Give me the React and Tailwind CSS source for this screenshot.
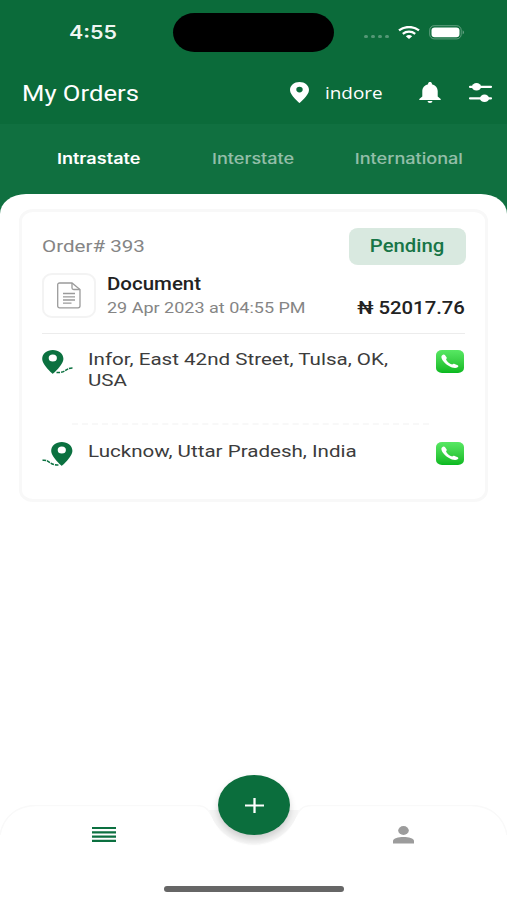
import { clsx } from 'clsx';

const TABS = ['Intrastate', 'Interstate', 'International'];

function Wide({ className, scale = 'scale-x-[1.17]', children }) {
  return <span className={clsx('inline-block whitespace-nowrap', scale, className)}>{children}</span>;
}

function StatusBar() {
  return (
    <div className="flex h-[64px] items-center pl-[69px] pr-[42px]">
      <Wide scale="scale-x-[1.19]" className="w-[104px] origin-left translate-y-[0.5px] font-['Inter'] text-[18px] leading-none font-semibold text-white/95">
        4:55
      </Wide>
      <div className="h-[39px] w-[161px] rounded-[22px/20px] bg-black" />
      <div className="ml-auto flex items-center">
        <div className="mt-[9px] mr-[9px] flex gap-[3px]">
          {[0, 1, 2, 3].map((dot) => (
            <span key={dot} className="h-[3px] w-[4px] rounded-full bg-white/30" />
          ))}
        </div>
        <svg className="mr-[9px] h-[13px] w-[22px]" viewBox="0 0 22 13" fill="none" stroke="#fff" strokeWidth="2.3">
          <path d="M1 4.4C6.6-.1 15.4-.1 21 4.4" />
          <path d="M4.8 7.8C8.4 5 13.6 5 17.2 7.8" />
          <path d="M7.8 10.2Q11 7.9 14.2 10.2L11 12.9Z" fill="#fff" stroke="none" />
        </svg>
        <svg className="h-[15px] w-[36px]" viewBox="0 0 36 15">
          <rect x=".7" y=".7" width="31.5" height="13.2" rx="4.5" fill="none" stroke="#fff" strokeOpacity=".35" />
          <rect x="2.5" y="2.4" width="28" height="9.8" rx="3.2" fill="#fff" />
          <path d="M33.7 5.3c1.7.8 1.7 3.4 0 4.2z" fill="#fff" fillOpacity=".4" />
        </svg>
      </div>
    </div>
  );
}

function TitleBar() {
  return (
    <div className="flex h-[60px] items-center pr-[15px] pb-[3px] pl-[22px]">
      <Wide scale="scale-x-[1.165]" className="origin-left translate-y-[1px] text-[22px] leading-none">
        My Orders
      </Wide>
      <svg className="ml-auto h-[21px] w-[19px]" viewBox="0 0 19 21">
        <path
          d="M9.5 0C4.2 0 0 3.5 0 8c0 5.5 9.5 13 9.5 13S19 13.5 19 8c0-4.5-4.2-8-9.5-8zm0 10.4a3.2 2.8 0 1 1 0-5.600 3.2 2.8 0 0 1 0 5.600z"
          fill="#fff"
        />
      </svg>
      <Wide scale="scale-x-[1.18]" className="ml-[16px] w-[58px] origin-left font-['Open_Sans'] text-[16px] leading-none font-medium">
        indore
      </Wide>
      <svg className="ml-[36px] h-[21px] w-[22px]" viewBox="0 0 22 21">
        <path
          d="M11 0c1.1 0 1.9.7 1.9 1.6v.6c3.7.8 5.8 3.5 5.8 6.9v5.3l3 2.5V18H.3v-1.1l3-2.5V9.1c0-3.4 2.1-6.1 5.8-6.9v-.6C9.1.7 9.9 0 11 0zM8.6 19h4.8c0 1.1-1.1 2-2.4 2s-2.4-.9-2.4-2z"
          fill="#fff"
        />
      </svg>
      <svg className="ml-[28px] h-[19px] w-[23px]" viewBox="0 0 23 19" fill="#fff">
        <path d="M1 3.8h21M1 15.3h21" stroke="#fff" strokeWidth="2.2" strokeLinecap="round" />
        <ellipse cx="7.5" cy="3.8" rx="4.6" ry="3.7" />
        <ellipse cx="15.500" cy="15.3" rx="4.6" ry="3.7" />
      </svg>
    </div>
  );
}

function Tabs() {
  return (
    <div className="flex h-[70px] items-center">
      {TABS.map((tab, index) => (
        <div key={tab} className={clsx('flex-1 text-center', index > 0 && 'opacity-55')}>
          <Wide
            scale="scale-x-[1.205]"
            className={clsx(
              "font-['Inter'] text-[15px] leading-none",
              index === 0 ? 'translate-x-[14px] font-semibold' : 'font-medium',
              index === 2 && '-translate-x-[14px]',
            )}
          >
            {tab}
          </Wide>
        </div>
      ))}
    </div>
  );
}

function RoutePin({ flipped }) {
  return (
    <svg className="mt-px h-[26px] w-[31px]" viewBox="0 0 31 26">
      <path
        transform={flipped ? 'translate(9 0)' : undefined}
        d="M10.8 0C4.8 0 .2 3.8.2 8.8c0 6.2 10.6 15.2 10.6 15.2S21.4 15 21.4 8.8c0-5-4.6-8.8-10.6-8.8zm0 11.600a4.100 3.600 0 1 1 0-7.2 4.100 3.600 0 0 1 0 7.2z"
        fill="#0b7140"
      />
      <path
        d={flipped ? 'M.5 18.3C8 17.3 7 23.5 16.5 22.9' : 'M14.5 22.4C24.5 23.3 23 18 30.5 18.1'}
        fill="none"
        stroke="#0b7140"
        strokeWidth="1.5"
        strokeDasharray="3.5 1"
      />
    </svg>
  );
}

function PhoneBadge() {
  return (
    <div className="flex h-[23px] w-[28px] items-center justify-center rounded-[6px/5px] bg-linear-to-b from-[#57e863] to-[#06b91f]">
      <svg className="h-[15px] w-[18px]" viewBox="0 0 18 15">
        <path
          d="M1 1.4C2 .3 3.2.2 3.9 1L5.5 3.2c.6.8.2 1.4-.5 2 .8 2.2 3.4 4.5 6.2 5.2.8-.6 1.5-.9 2.4-.4l3.1 1.2c1 .5.9 1.3-.1 2-1.7 1.3-5.3.9-9-1.5C2.9 9 .3 5 .4 2.7c0-.5.2-.9.6-1.3z"
          fill="#fff"
        />
      </svg>
    </div>
  );
}

function Stop({ flipped, children }) {
  return (
    <div className="flex items-start">
      <RoutePin flipped={flipped} />
      <p className="ml-[15px] w-[280px] origin-left scale-x-[1.21] text-[17px] leading-[20.5px] text-[#3c3c3c]">{children}</p>
      <div className="mt-px mr-px ml-auto">
        <PhoneBadge />
      </div>
    </div>
  );
}

function OrderCard() {
  return (
    <div className="mx-[19px] mt-[15px] h-[293px] rounded-[14px/12px] border-[3px] border-[#f8f8f8] bg-white px-[20px]">
      <div className="mt-[16px] flex items-center justify-between">
        <Wide scale="scale-x-[1.21]" className="origin-left text-[17px] leading-none text-[#858585]">
          Order# 393
        </Wide>
        <div className="-mr-px flex h-[37px] w-[117px] items-center justify-center rounded-[9px/8px] bg-[#d9e9e0] text-[#177547]">
          <Wide scale="scale-x-[1.16]" className="text-[17.5px] leading-none font-medium">
            Pending
          </Wide>
        </div>
      </div>
      <div className="mt-[8px] flex h-[45px]">
        <div className="flex h-[45px] w-[54px] items-center justify-center rounded-[10px/9px] border-2 border-[#f3f3f3]">
          <svg className="h-[27px] w-[24px]" viewBox="0 0 24 27" fill="none" stroke="#9b9b9b" strokeWidth="1.3">
            <path d="M2.5 1H15l8 6.5V24c0 1.1-.7 1.8-1.9 1.8H2.5C1.5 25.8.7 25 .7 24V2.5C.7 1.6 1.5 1 2.5 1z" />
            <path d="M15 1v5c0 1 .6 1.5 1.7 1.5H23" />
            <path d="M6 11.5h12M6 14.8h12M6 18h12M6 21.2h8.5" />
          </svg>
        </div>
        <div className="ml-[11px] flex flex-col items-start">
          <Wide className="origin-left translate-y-[0.5px] text-[17.5px] leading-[20px] font-medium text-[#222]">Document</Wide>
          <Wide scale="scale-x-[1.2]" className="mt-[5px] origin-left text-[15px] leading-[20px] text-[#858585]">
            29 Apr 2023 at 04:55 PM
          </Wide>
        </div>
        <Wide scale="scale-x-[1.16]" className="mt-[24px] ml-auto origin-right translate-y-[0.5px] text-[17.5px] leading-[20px] font-medium text-[#222]">
          ₦ 52017.76
        </Wide>
      </div>
      <div className="mt-[15px] h-px bg-[#ececec]" />
      <div className="mt-[15px] h-[74px]">
        <Stop>
          Infor, East 42nd Street, Tulsa, OK,
          <br />
          USA
        </Stop>
      </div>
      <div className="mr-[36px] ml-[30px] border-t-2 border-dashed border-[#f8f8f8]" />
      <div className="mt-[16px]">
        <Stop flipped>Lucknow, Uttar Pradesh, India</Stop>
      </div>
    </div>
  );
}

function BottomNav() {
  return (
    <nav className="relative mt-auto h-[95px]">
      <svg className="absolute inset-0 h-[95px] w-[507px]" viewBox="0 0 507 95" fill="none">
        <path
          d="M0 30C3 12 17 .5 36 .5H196C207 .5 209 6 213 13C229 48 279 48 295 13C299 6 301 .5 312 .5H471C490 .5 504 12 507 30"
          stroke="#f9f9f9"
          strokeWidth="1.5"
        />
        <path d="M209 5C223 50 285 50 299 5Z" fill="#f5f5f5" />
      </svg>
      <div className="relative flex justify-between pt-[21px] pr-[93px] pl-[92px]">
        <svg className="h-[17px] w-[24px]" viewBox="0 0 24 17" stroke="#0c7040" strokeWidth="2.200">
          <path d="M0 2h24M0 6.300h24M0 10.600h24M0 14.900h24" />
        </svg>
        <svg className="h-[18px] w-[21px]" viewBox="0 0 21 18" fill="#9c9c9c">
          <ellipse cx="10.5" cy="4.5" rx="5.3" ry="4.4" />
          <path d="M0 17.5v-2.6c0-2.7 5.600-4 10.500-4S21 12.2 21 14.9V17.500z" />
        </svg>
      </div>
      <button className="absolute -top-[30px] left-[218px] flex h-[60px] w-[72px] items-center justify-center rounded-[50%] bg-[#0b6e3d] shadow-[0_4px_7px_rgba(0,0,0,0.17)]">
        <svg className="h-[15px] w-[19px]" viewBox="0 0 19 15" stroke="#fff">
          <path d="M0 7.5h19" strokeWidth="2" />
          <path d="M9.5 0v15" strokeWidth="2.3" />
        </svg>
      </button>
      <div className="absolute bottom-[8.5px] left-[164px] h-[5.5px] w-[180px] rounded-full bg-[#666]" />
    </nav>
  );
}

export default function App() {
  return (
    <div className="flex h-[900px] w-[507px] flex-col overflow-hidden bg-[#107040] font-['Roboto',sans-serif]">
      <header className="text-white">
        <div className="h-[124px] bg-[#0b6b3a]">
          <StatusBar />
          <TitleBar />
        </div>
        <Tabs />
      </header>
      <main className="flex flex-1 flex-col bg-white [border-top-left-radius:26px_20px] [border-top-right-radius:26px_20px]">
        <OrderCard />
        <BottomNav />
      </main>
    </div>
  );
}
